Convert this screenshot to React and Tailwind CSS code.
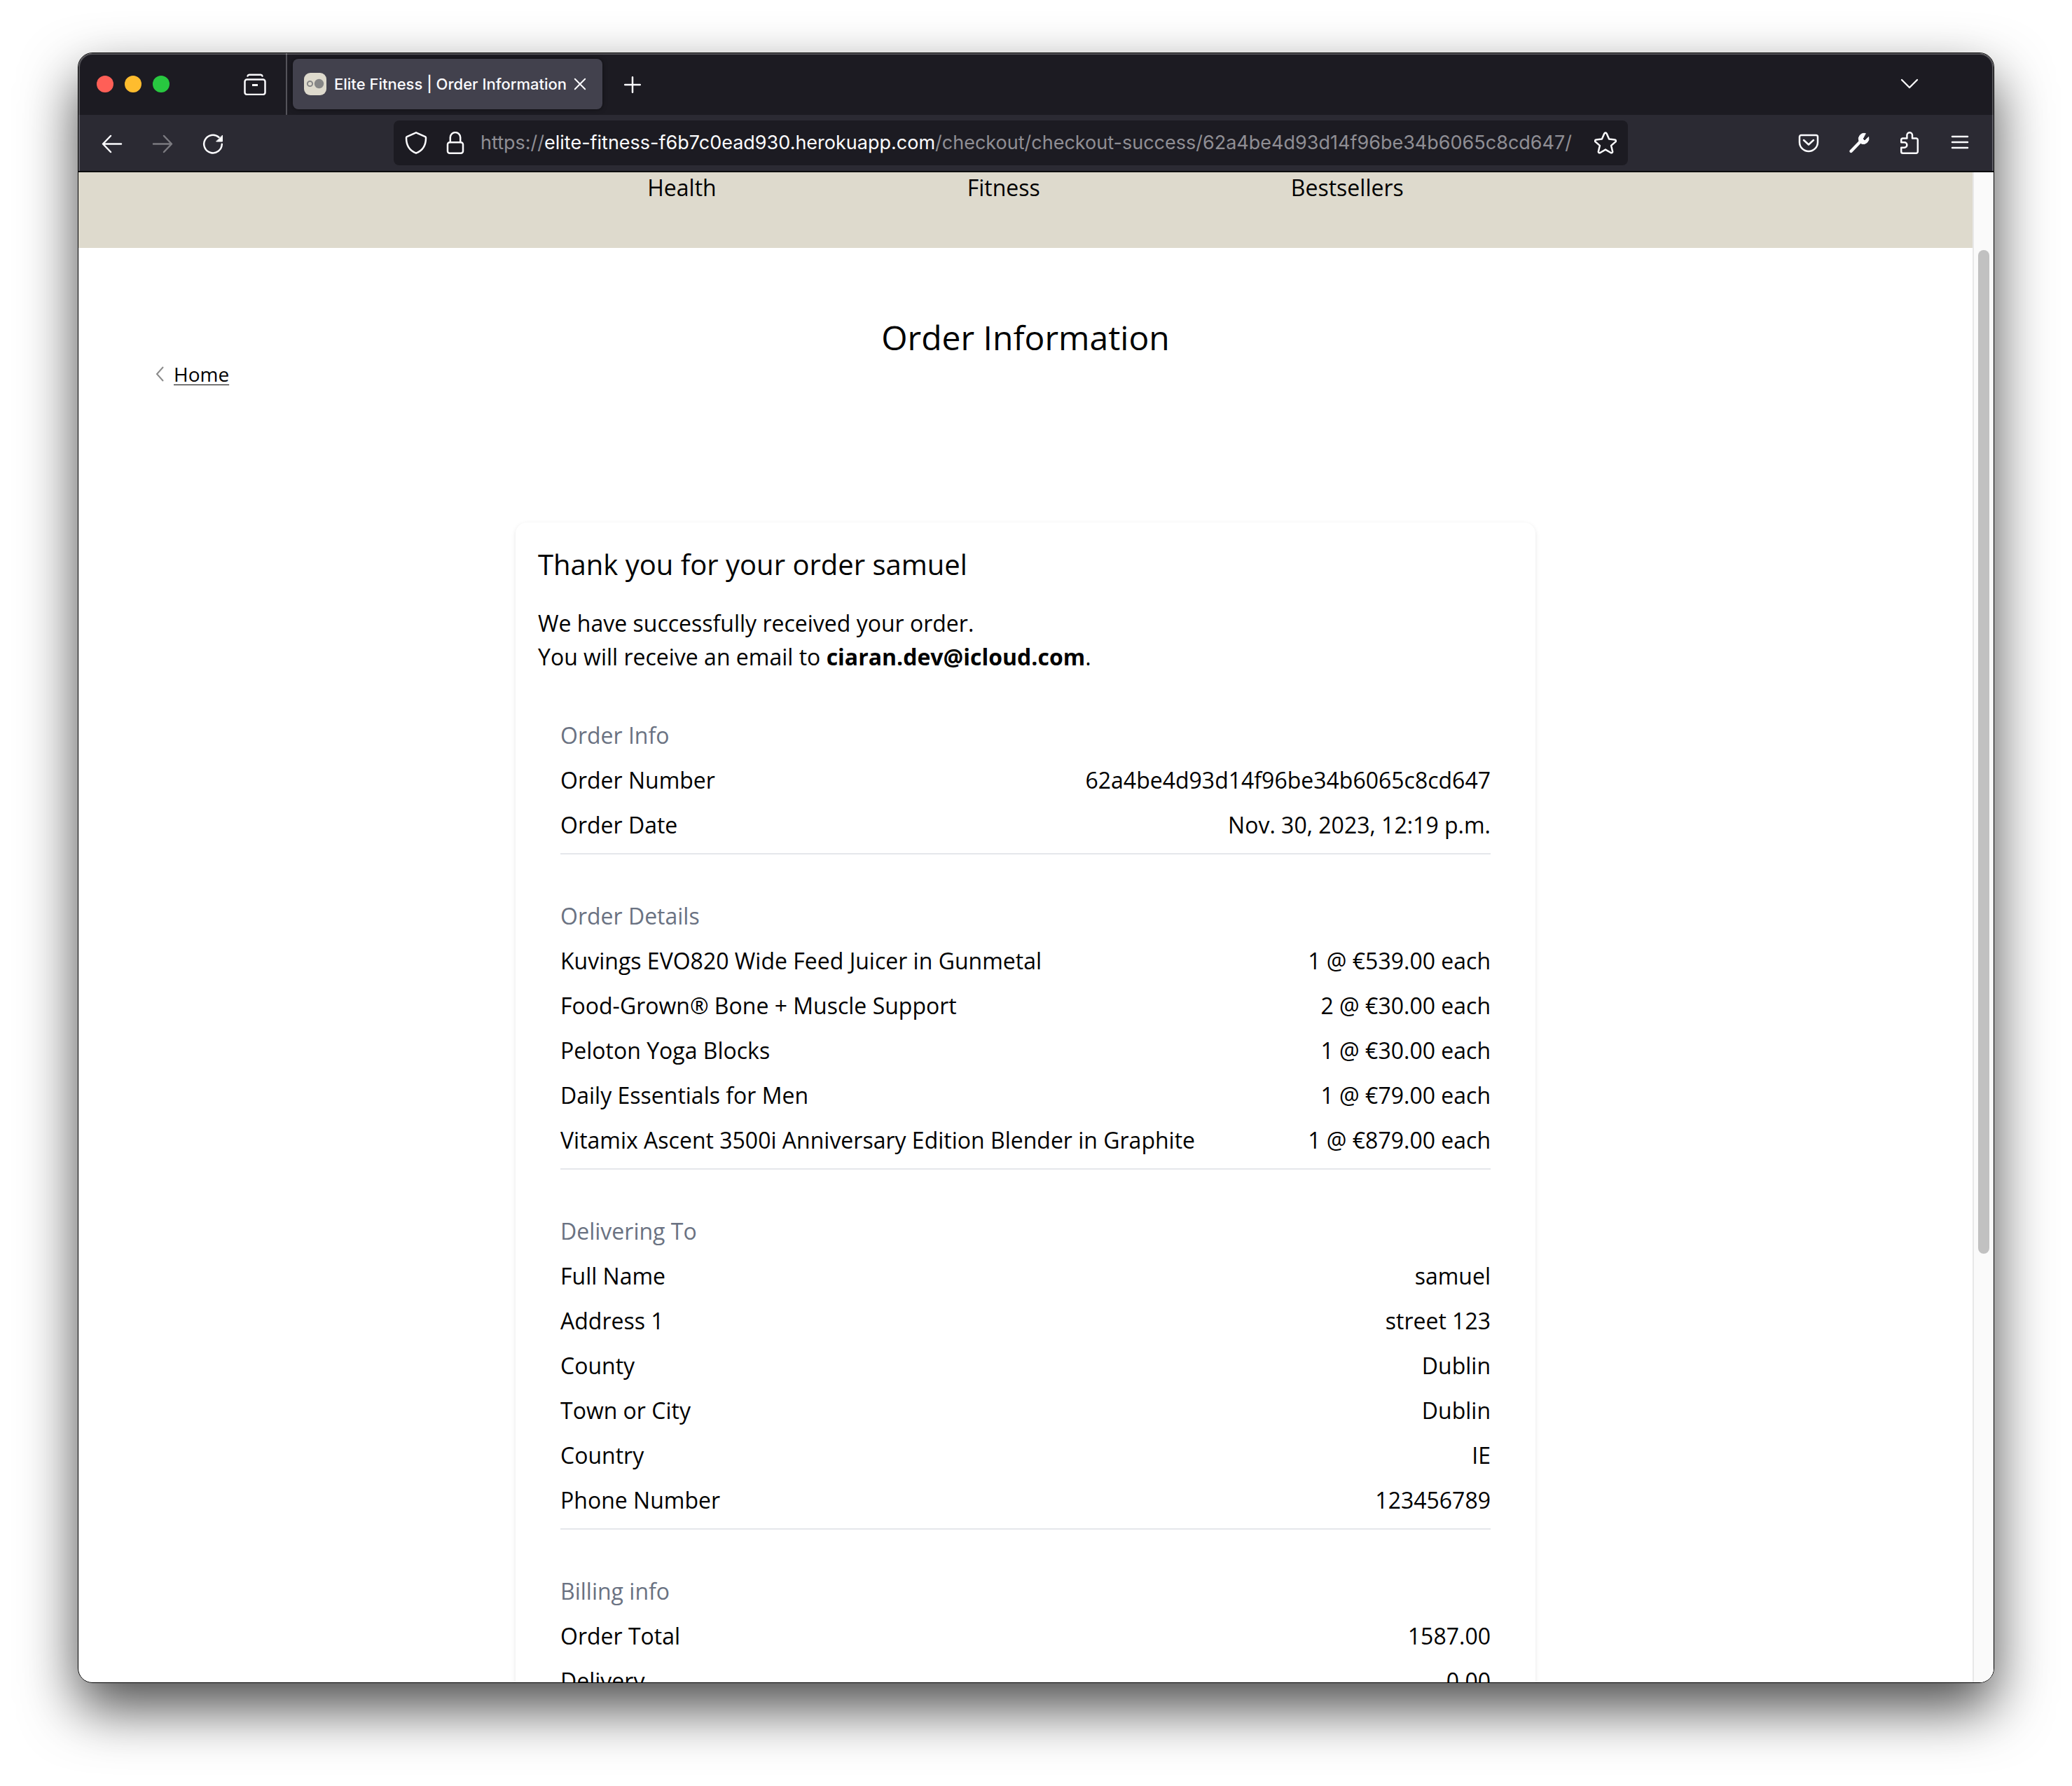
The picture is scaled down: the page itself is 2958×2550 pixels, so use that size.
import React from 'react';

const sections = [
  {
    title: 'Order Info',
    rows: [
      ['Order Number', '62a4be4d93d14f96be34b6065c8cd647'],
      ['Order Date', 'Nov. 30, 2023, 12:19 p.m.'],
    ],
  },
  {
    title: 'Order Details',
    rows: [
      ['Kuvings EVO820 Wide Feed Juicer in Gunmetal', '1 @ €539.00 each'],
      ['Food-Grown® Bone + Muscle Support', '2 @ €30.00 each'],
      ['Peloton Yoga Blocks', '1 @ €30.00 each'],
      ['Daily Essentials for Men', '1 @ €79.00 each'],
      ['Vitamix Ascent 3500i Anniversary Edition Blender in Graphite', '1 @ €879.00 each'],
    ],
  },
  {
    title: 'Delivering To',
    rows: [
      ['Full Name', 'samuel'],
      ['Address 1', 'street 123'],
      ['County', 'Dublin'],
      ['Town or City', 'Dublin'],
      ['Country', 'IE'],
      ['Phone Number', '123456789'],
    ],
  },
  {
    title: 'Billing info',
    rows: [
      ['Order Total', '1587.00'],
      ['Delivery', '0.00'],
    ],
  },
];

function Icon({ children, className = '' }) {
  return (
    <svg
      viewBox="0 0 32 32"
      className={`size-8 shrink-0 ${className}`}
      fill="none"
      stroke="currentColor"
      strokeWidth="2.5"
      strokeLinecap="round"
      strokeLinejoin="round"
      aria-hidden="true"
    >
      {children}
    </svg>
  );
}

function TabBar() {
  return (
    <div className="flex h-[88px] items-stretch bg-[#1c1b22]">
      <div className="flex items-center gap-4 pl-[26px]">
        <button aria-label="Close window" className="size-6 rounded-full bg-[#ff5f57]" />
        <button aria-label="Minimise window" className="size-6 rounded-full bg-[#febc2e]" />
        <button aria-label="Zoom window" className="size-6 rounded-full bg-[#28c840]" />
      </div>
      <button aria-label="Firefox View" className="ml-[106px] mr-7">
        <Icon>
          <path d="M5.500 4.500a2.500 2.500 0 0 1 2.300-1.800h16.400a2.500 2.500 0 0 1 2.300 1.800" />
          <rect x="1.500" y="9.500" width="29" height="21.500" rx="3" />
          <path d="M12 17.500h8" strokeLinecap="butt" strokeWidth="3" />
        </Icon>
      </button>
      <div className="w-0.5 bg-[#54535a]" />
      <div className="my-2 ml-2 flex w-[442px] items-center rounded-lg bg-[#42414d] pl-4 shadow-[0_0_6px_rgba(0,0,0,0.5)]">
        <svg viewBox="0 0 32 32" className="size-8 shrink-0" aria-hidden="true">
          <rect width="32" height="32" rx="9" fill="#dedacd" />
          <circle cx="8.500" cy="15.500" r="3.600" fill="none" stroke="#868686" strokeWidth="2" />
          <circle cx="21.500" cy="15.500" r="6.700" fill="#868686" />
        </svg>
        <span className="ml-[11px] whitespace-nowrap text-[22px] leading-8 font-medium">Elite Fitness | Order Information</span>
        <button aria-label="Close tab" className="mr-4 ml-auto">
          <Icon>
            <path d="M8.800 8.800l14.400 14.400M23.200 8.800L8.800 23.200" strokeWidth="2" />
          </Icon>
        </button>
      </div>
      <button aria-label="New tab" className="ml-[27px]">
        <Icon>
          <path d="M16 6.200v21.600M5.200 17h21.600" strokeWidth="2.500" />
        </Icon>
      </button>
      <button aria-label="List all tabs" className="mr-[104px] ml-auto">
        <Icon>
          <path d="M5 10l11 11L27 10" strokeWidth="2.300" />
        </Icon>
      </button>
    </div>
  );
}

function Toolbar() {
  return (
    <div className="flex h-[82px] items-center border-b-2 border-[#0c0c0d] bg-[#2b2a33] pr-8">
      <div className="flex gap-10 pl-8">
        <button aria-label="Back">
          <Icon>
            <path d="M29 17.500H3M14 6L3 17.500L14 29" />
          </Icon>
        </button>
        <button aria-label="Forward" disabled className="text-[#7b7a80]">
          <Icon>
            <path d="M3 17.500h26M18 6l11 11.500L18 29" />
          </Icon>
        </button>
        <button aria-label="Reload">
          <Icon>
            <path d="M24.500 8A12.800 12.800 0 1 0 28.800 17.800" />
            <path d="M29.500 5.500v8.500h-8.500z" fill="currentColor" strokeWidth="1" />
          </Icon>
        </button>
      </div>
      <div className="ml-[242px] flex h-16 min-w-0 flex-1 items-center rounded-lg bg-[#1c1b22] px-4">
        <button aria-label="Tracking protection">
          <Icon>
            <path d="M16 1.300L29 7.200a1.800 1.800 0 0 1 1 1.800C30 19.500 25.500 27 16 30.700C6.500 27 2 19.500 2 9a1.800 1.800 0 0 1 1-1.800z" />
          </Icon>
        </button>
        <button aria-label="Site information" className="ml-6">
          <Icon>
            <rect x="5" y="15.200" width="22" height="15.500" rx="3" />
            <path d="M8.800 15V8.300a7.200 7.200 0 0 1 14.400 0V15" />
          </Icon>
        </button>
        <a href="#url" className="ml-5 min-w-0 flex-1 whitespace-nowrap text-[27px] leading-10 text-[#8f8e94]">
          https://<span className="text-[#fbfbfe]">elite-fitness-f6b7c0ead930.herokuapp.com</span>
          /checkout/checkout-success/62a4be4d93d14f96be34b6065c8cd647/
        </a>
        <button aria-label="Bookmark this page">
          <Icon>
            <path d="M14.400 2.600a1.800 1.800 0 0 1 3.200 0l3.500 8 8.300.8a1.700 1.700 0 0 1 1 3l-6.300 5.500 2 8.300a1.700 1.700 0 0 1-2.600 1.800L16 25.600l-7.500 4.400a1.700 1.700 0 0 1-2.600-1.800l2-8.300-6.300-5.500a1.700 1.700 0 0 1 1-3l8.300-.8z" />
          </Icon>
        </button>
      </div>
      <div className="ml-[242px] flex gap-10">
        <button aria-label="Save to Pocket">
          <Icon>
            <path d="M5.500 5h21a2.500 2.500 0 0 1 2.500 2.500V15a13 13 0 0 1-26 0V7.500A2.500 2.500 0 0 1 5.500 5z" />
            <path d="M9 12L16 18.500l7-6.500" />
          </Icon>
        </button>
        <button aria-label="Developer tools">
          <Icon>
            <path d="M4.500 28L18 14" strokeWidth="4.400" />
            <path d="M25 2.500a8 8 0 0 0-9 11l3.500 3.700a8 8 0 0 0 10.200-9.700l-5.700 5.500-2.500-2.500z" fill="currentColor" strokeWidth="1" />
          </Icon>
        </button>
        <button aria-label="Extensions">
          <Icon>
            <path d="M6.500 30.700h19a2.300 2.300 0 0 0 2.300-2.300V11.800a2.300 2.300 0 0 0-2.300-2.300H20V5a3.800 3.800 0 0 0-7.600 0v4.500H6.500a2.300 2.300 0 0 0-2.300 2.300v3.500h4.500a3.700 3.700 0 0 1 0 7.400H4.200v5.700a2.300 2.300 0 0 0 2.300 2.300z" />
          </Icon>
        </button>
        <button aria-label="Menu">
          <Icon>
            <path d="M5 7h22M5 15h22M5 23h22" />
          </Icon>
        </button>
      </div>
    </div>
  );
}

function OrderSection({ title, rows }) {
  return (
    <section className="flex flex-col gap-4 border-b-2 border-gray-200 pb-4">
      <h3 className="text-gray-500">{title}</h3>
      {rows.map(([label, value]) => (
        <div key={label} className="flex justify-between">
          <span>{label}</span>
          <span>{value}</span>
        </div>
      ))}
    </section>
  );
}

export default function App() {
  return (
    <div className="h-screen overflow-hidden bg-white px-[111px] pt-[75px] pb-[147px]">
      <div className="h-full rounded-[21px] shadow-[0_36px_80px_rgba(0,0,0,0.7)]">
        <div className="relative flex h-full flex-col overflow-hidden rounded-[21px] border border-black bg-white font-['Inter',sans-serif] text-[#fbfbfe]">
          <TabBar />
          <Toolbar />
          <div className="pointer-events-none absolute inset-x-0 top-0 h-[168px] rounded-t-[20px] border-x-2 border-t-2 border-white/25" />
          <div className="flex min-h-0 flex-1 text-black">
            <main className="flex-1 overflow-hidden font-['Open_Sans','Noto_Sans',sans-serif] text-[32px] leading-[48px]">
              <nav className="flex h-[108px] justify-center gap-[358px] bg-[#dedacd] leading-[44px]">
                <a href="#health">Health</a>
                <a href="#fitness">Fitness</a>
                <a href="#bestsellers">Bestsellers</a>
              </nav>
              <h1 className="pt-24 text-center text-[48px] leading-[64px]">Order Information</h1>
              <div className="flex h-10 items-center gap-3.5 pl-[110px] text-[28px] leading-10">
                <svg viewBox="0 0 12 22" className="h-[22px] w-3" fill="none" stroke="#8a8a8a" strokeWidth="2" aria-hidden="true">
                  <path d="M11 1L2 11l9 10" />
                </svg>
                <a href="#home" className="underline decoration-1 underline-offset-4">Home</a>
              </div>
              <article className="mx-auto mt-48 max-w-[1456px] rounded-2xl p-8 shadow-[0_2px_6px_rgba(0,0,0,0.1)]">
                <h2 className="text-[40px] leading-[56px]">Thank you for your order samuel</h2>
                <p className="mt-8">
                  We have successfully received your order.
                  <br />
                  You will receive an email to <strong className="font-bold">ciaran.dev@icloud.com</strong>.
                </p>
                <div className="mt-16 flex flex-col gap-16 px-8">
                  {sections.map((section) => (
                    <OrderSection key={section.title} {...section} />
                  ))}
                </div>
              </article>
            </main>
            <div className="w-[30px] border-l-2 border-[#e8e8e8] bg-[#fafafa] pt-[111px] pl-1.5">
              <div className="h-[1433px] w-4 rounded-full bg-[#c1c1c1]" />
            </div>
          </div>
        </div>
      </div>
    </div>
  );
}
